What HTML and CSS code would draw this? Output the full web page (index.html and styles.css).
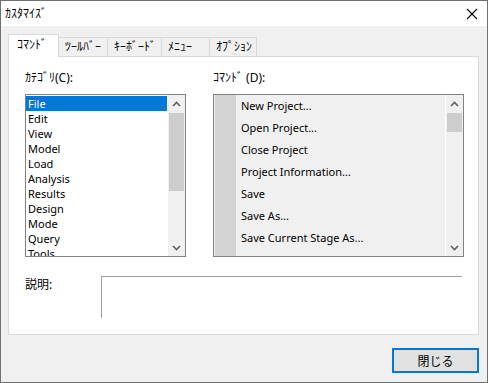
FILE: index.html
```html
<!DOCTYPE html>
<html lang="ja">
<head>
    <meta charset="UTF-8">
    <title>ｶｽﾀﾏｲｽﾞ</title>
    <link rel="stylesheet" href="styles.css">
</head>
<body>
<div class="window">
    <!-- Title bar -->
    <div class="titlebar">
        <span class="title">ｶｽﾀﾏｲｽﾞ</span>
        <svg class="close" width="12" height="12" viewBox="0 0 12 12">
            <path d="M1 1 L11 11 M11 1 L1 11" stroke="#000" stroke-width="1.1" fill="none"/>
        </svg>
    </div>

    <!-- Tabs -->
    <div class="tabs">
        <div class="tab active">ｺﾏﾝﾄﾞ</div>
        <div class="tab">ﾂｰﾙﾊﾞｰ</div>
        <div class="tab">ｷｰﾎﾞｰﾄﾞ</div>
        <div class="tab">ﾒﾆｭｰ</div>
        <div class="tab">ｵﾌﾟｼｮﾝ</div>
    </div>

    <div class="panel">
        <div class="columns">
            <div class="col col-left">
                <div class="label">ｶﾃｺﾞﾘ(C):</div>
                <div class="listbox">
                    <ul class="items">
                        <li class="selected">File</li>
                        <li>Edit</li>
                        <li>View</li>
                        <li>Model</li>
                        <li>Load</li>
                        <li>Analysis</li>
                        <li>Results</li>
                        <li>Design</li>
                        <li>Mode</li>
                        <li>Query</li>
                        <li>Tools</li>
                    </ul>
                    <div class="scrollbar">
                        <div class="sb-btn">
                            <svg width="9" height="6" viewBox="0 0 9 6"><path d="M1 5 L4.5 1.5 L8 5" stroke="#606060" stroke-width="1.6" fill="none"/></svg>
                        </div>
                        <div class="sb-track"><div class="sb-thumb thumb-long"></div></div>
                        <div class="sb-btn">
                            <svg width="9" height="6" viewBox="0 0 9 6"><path d="M1 1 L4.5 4.5 L8 1" stroke="#606060" stroke-width="1.6" fill="none"/></svg>
                        </div>
                    </div>
                </div>
            </div>

            <div class="col col-right">
                <div class="label">ｺﾏﾝﾄﾞ (D):</div>
                <div class="listbox commands">
                    <div class="icon-strip"></div>
                    <ul class="cmd-items">
                        <li>New Project...</li>
                        <li>Open Project...</li>
                        <li>Close Project</li>
                        <li>Project Information...</li>
                        <li>Save</li>
                        <li>Save As...</li>
                        <li>Save Current Stage As...</li>
                    </ul>
                    <div class="scrollbar">
                        <div class="sb-btn">
                            <svg width="9" height="6" viewBox="0 0 9 6"><path d="M1 5 L4.5 1.5 L8 5" stroke="#606060" stroke-width="1.6" fill="none"/></svg>
                        </div>
                        <div class="sb-track"><div class="sb-thumb thumb-short"></div></div>
                        <div class="sb-btn">
                            <svg width="9" height="6" viewBox="0 0 9 6"><path d="M1 1 L4.5 4.5 L8 1" stroke="#606060" stroke-width="1.6" fill="none"/></svg>
                        </div>
                    </div>
                </div>
            </div>
        </div>

        <!-- Description -->
        <div class="desc-row">
            <div class="desc-label">説明:</div>
            <div class="desc-box"></div>
        </div>
    </div>

    <div class="footer">
        <button class="btn-close">閉じる</button>
    </div>
</div>
</body>
</html>
```

FILE: styles.css
```css
/* Base */
body {
    margin: 0;
    font-family: "Noto Sans", "Noto Sans CJK JP", sans-serif;
    font-size: 12px;
    color: #000;
    background: #fff;
}

.window {
    width: 488px;
    height: 383px;
    box-sizing: border-box;
    border: 1px solid #707070;
    background-color: #f0f0f0;
    display: flex;
    flex-direction: column;
}

/* Title bar */
.titlebar {
    height: 25px;
    background-color: #fff;
    display: flex;
    align-items: center;
    justify-content: space-between;
    padding: 0 9px 0 4px;
}

.title {
    font-size: 12px;
    line-height: 15px;
}

/* Tabs */
.tabs {
    display: flex;
    align-items: flex-start;
    margin: 8px 0 -1px 7px;
    height: 23px;
    position: relative;
    z-index: 1;
}

.tab {
    height: 19px;
    margin-top: 3px;
    box-sizing: border-box;
    padding: 0 0 0 6px;
    line-height: 18px;
    border: 1px solid #d9d9d9;
    border-bottom: none;
    border-left: none;
    background-color: #f0f0f0;
    white-space: nowrap;
}

.tab:nth-child(2) { width: 49px; }
.tab:nth-child(3) { width: 54px; }
.tab:nth-child(4) { width: 48px; }
.tab:nth-child(5) { width: 47px; }

.tab.active {
    width: 51px;
    height: 23px;
    margin-top: 0;
    line-height: 20px;
    padding-left: 8px;
    background-color: #fff;
    border-left: 1px solid #d9d9d9;
}

/* Panel */
.panel {
    height: 279px;
    box-sizing: border-box;
    margin: 0 8px 0 7px;
    background-color: #fff;
    border: 1px solid #d9d9d9;
    padding: 13px 0 0 16px;
}

.columns {
    display: flex;
    gap: 27px;
}

.label {
    line-height: 15px;
    margin-bottom: 9px;
}

.listbox {
    height: 163px;
    box-sizing: border-box;
    border: 1px solid #828282;
    display: flex;
    overflow: hidden;
    background-color: #fff;
    font-size: 11px;
}

.col-left .listbox {
    width: 161px;
}

.col-right .listbox {
    width: 251px;
}

.items {
    list-style: none;
    margin: 0;
    padding: 1px 0 0 0;
    flex: 1;
    overflow: hidden;
}

.items li {
    height: 15px;
    line-height: 15px;
    padding-left: 2px;
}

.items li.selected {
    background-color: #0078d7;
    color: #fff;
}

/* Commands list */
.commands {
    background-color: #f0f0f0;
}

.icon-strip {
    width: 21px;
    background-color: #d4d4d4;
    margin-left: 1px;
}

.cmd-items {
    list-style: none;
    margin: 0;
    padding: 0 0 0 5px;
    flex: 1;
    overflow: hidden;
}

.cmd-items li {
    height: 22px;
    line-height: 22px;
}

/* Scrollbars */
.scrollbar {
    width: 17px;
    display: flex;
    flex-direction: column;
    background-color: #f0f0f0;
    border-left: 1px solid #fff;
}

.sb-btn {
    height: 17px;
    display: flex;
    align-items: center;
    justify-content: center;
}

.sb-track {
    flex: 1;
    padding-top: 1px;
}

.sb-thumb {
    background-color: #cdcdcd;
    margin: 0 1px;
}

.thumb-long {
    height: 78px;
}

.thumb-short {
    height: 19px;
}

/* Description */
.desc-row {
    display: flex;
    margin-top: 19px;
}

.desc-label {
    width: 76px;
    line-height: 15px;
    padding-top: 1px;
}

.desc-box {
    width: 361px;
    height: 42px;
    box-sizing: border-box;
    border-top: 1px solid #a0a0a0;
    border-left: 1px solid #a0a0a0;
}

/* Footer */
.footer {
    display: flex;
    justify-content: flex-end;
    padding: 13px 8px 0 0;
}

.btn-close {
    width: 87px;
    height: 25px;
    border: 2px solid #0078d7;
    background-color: #e1e1e1;
    font-family: "Noto Sans", "Noto Sans CJK JP", sans-serif;
    font-size: 12px;
    color: #000;
    padding: 0;
}
```
